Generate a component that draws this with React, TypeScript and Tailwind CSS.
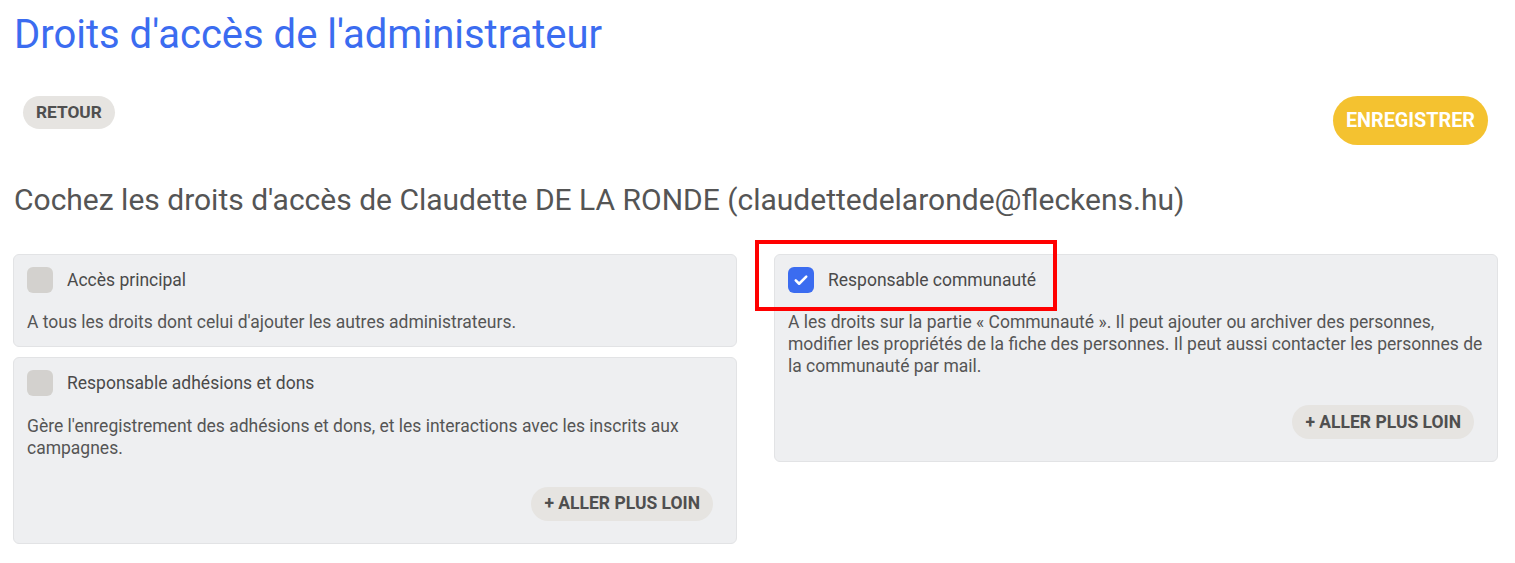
import React from "react";

const font = { fontFamily: "Roboto, 'Noto Sans', Arial, sans-serif" };

function Check({ checked }: { checked?: boolean }) {
  if (!checked) return <span className="block h-[26px] w-[26px] shrink-0 rounded-md bg-[#d3d1ce]" />;
  return (
    <span className="flex h-[26px] w-[26px] shrink-0 items-center justify-center rounded-md bg-[#3b6cf0]">
      <svg width="18" height="18" viewBox="0 0 24 24" fill="none" stroke="white" strokeWidth="3.4" strokeLinecap="round" strokeLinejoin="round">
        <path d="M5 12.5l4.5 4.5L19 7.5" />
      </svg>
    </span>
  );
}

function MoreButton() {
  return (
    <div className="flex justify-end pr-[10px]">
      <button className="h-[34px] rounded-full bg-[#e6e4e1] px-[13px] text-[17.5px] font-bold text-[#4f4f4f]">
        + ALLER PLUS LOIN
      </button>
    </div>
  );
}

function Card({
  label,
  checked,
  children,
  more,
}: {
  label: string;
  checked?: boolean;
  children: React.ReactNode;
  more?: boolean;
}) {
  return (
    <div className="rounded-md border border-[#e2e3e5] bg-[#eeeff1] px-[13px] pt-[12px] pb-[13px]">
      <div className="flex items-center gap-[14px]">
        <Check checked={checked} />
        <span className="text-[17.5px] text-[#4a4a4a]">{label}</span>
      </div>
      <p className="mt-[18px] text-[17.5px] leading-[22px] text-[#555]">{children}</p>
      {more && (
        <div className="mt-[28px] pb-[9px]">
          <MoreButton />
        </div>
      )}
    </div>
  );
}

export default function App() {
  return (
    <div className="min-h-screen bg-white pl-[13px] pr-[17px] pt-[11px]" style={font}>
      <h1 className="pl-px text-[40px] leading-[48px] text-[#3b6cf0]">Droits d'accès de l'administrateur</h1>

      <div className="mt-[37px] flex items-start justify-between pl-[10px] pr-[10px]">
        <button className="h-[33px] rounded-full bg-[#e6e4e1] px-[13px] text-[17.3px] font-bold text-[#4f4f4f]">
          RETOUR
        </button>
        <button className="h-[49px] rounded-full bg-[#f4c230] px-[13px] text-[19.8px] font-bold text-white">
          ENREGISTRER
        </button>
      </div>

      <h2 className="mt-[37px] pl-px text-[30px] leading-[36px] text-[#555]">
        Cochez les droits d'accès de Claudette DE LA RONDE (claudettedelaronde@fleckens.hu)
      </h2>

      <div className="mt-[36px] grid grid-cols-2 items-start gap-[37px]">
        <div className="flex flex-col gap-[10px]">
          <Card label="Accès principal">A tous les droits dont celui d'ajouter les autres administrateurs.</Card>
          <Card label="Responsable adhésions et dons" more>
            Gère l'enregistrement des adhésions et dons, et les interactions avec les inscrits aux campagnes.
          </Card>
        </div>
        <div className="relative">
          <Card label="Responsable communauté" checked more>
            A les droits sur la partie « Communauté ». Il peut ajouter ou archiver des personnes, modifier les propriétés
            de la fiche des personnes. Il peut aussi contacter les personnes de la communauté par mail.
          </Card>
          <div className="pointer-events-none absolute left-[-19px] top-[-14px] h-[71px] w-[302px] border-4 border-[#ff0000]" />
        </div>
      </div>
    </div>
  );
}
